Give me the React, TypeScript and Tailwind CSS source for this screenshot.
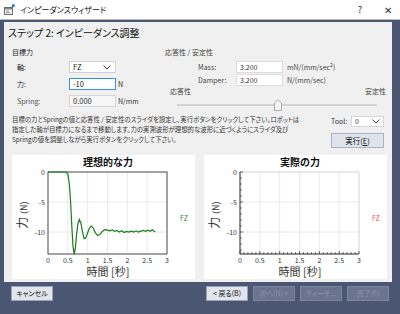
import React from 'react';

const jp = "font-['Noto_Sans_CJK_JP',sans-serif] [font-feature-settings:'palt']";

const WizardIcon = () => (
  <svg width="11" height="11" viewBox="0 0 11 11">
    <rect x="0.5" y="3.5" width="8" height="7" fill="#f4f4f4" stroke="#6b6b6b" />
    <rect x="1" y="4" width="7" height="1.5" fill="#8c8c8c" />
    <rect x="2" y="6.5" width="3" height="1" fill="#9a9a9a" />
    <rect x="2" y="8" width="4" height="1" fill="#9a9a9a" />
    <path d="M7 4 L10 1 M8 1 H10 V3" stroke="#2b7bd6" strokeWidth="1.3" fill="none" />
  </svg>
);

const Chevron = () => (
  <svg width="8" height="5" viewBox="0 0 8 5">
    <path d="M0.5 0.5 L4 4 L7.5 0.5" stroke="#333" strokeWidth="0.9" fill="none" />
  </svg>
);

const curve: [number, number][] = [
  [0, 0], [0.45, 0], [0.5, -0.3], [0.54, -2], [0.57, -5], [0.6, -9], [0.63, -12.4],
  [0.66, -13.7], [0.69, -12.6], [0.72, -10.4], [0.75, -8.7], [0.79, -7.9], [0.83, -8.5],
  [0.87, -10], [0.91, -11.1], [0.95, -11.0], [0.99, -10.3], [1.04, -9.4], [1.09, -9.0],
  [1.14, -9.3], [1.19, -10.1], [1.25, -10.6], [1.31, -10.4], [1.37, -9.9], [1.43, -9.6],
  [1.5, -9.7], [1.56, -9.8], [1.62, -9.65], [1.68, -9.9], [1.74, -9.75], [1.8, -10.0],
  [1.86, -9.8], [1.92, -10.1], [1.98, -9.9], [2.04, -10.0], [2.1, -9.85], [2.16, -10.0],
  [2.22, -9.8], [2.28, -10.0], [2.34, -9.85], [2.4, -9.75], [2.46, -9.9], [2.52, -9.7],
  [2.58, -9.9], [2.63, -9.6], [2.67, -9.85], [2.7, -10.0],
];

const X0 = 36;
const X1 = 155;
const Y0 = 17;
const Y1 = 99;
const px = (t: number) => X0 + (t / 3) * (X1 - X0);
const py = (f: number) => Y0 - f * 6;

const Chart = ({
  title,
  legend,
  legendColor,
  data,
  ticks,
}: {
  title: string;
  legend: string;
  legendColor: string;
  data?: [number, number][];
  ticks?: boolean;
}) => {
  const fam = "'Noto Sans CJK JP', sans-serif";
  const xs = [0, 0.5, 1, 1.5, 2, 2.5, 3];
  return (
    <div className="w-[183px] h-[124px] bg-white">
      <svg width="183" height="124" viewBox="0 0 183 124" fontFamily={fam}>
        <text x="96" y="11" textAnchor="middle" fontSize="10" fontWeight="700" fill="#111">
          {title}
        </text>
        {xs.slice(1, 6).map((t) => (
          <line key={t} x1={px(t)} x2={px(t)} y1={Y0} y2={Y1} stroke="#e4e4e4" strokeWidth="0.8" />
        ))}
        {[-5, -10].map((f) => (
          <line key={f} x1={X0} x2={X1} y1={py(f)} y2={py(f)} stroke="#e4e4e4" strokeWidth="0.8" />
        ))}
        {ticks ? (
          <>
            <line x1={X0} x2={X1} y1={Y0} y2={Y0} stroke="#c8c8c8" strokeWidth="0.8" />
            <line x1={X1} x2={X1} y1={Y0} y2={Y1} stroke="#c8c8c8" strokeWidth="0.8" />
            <line x1={X0} x2={X0} y1={Y0} y2={Y1} stroke="#222" strokeWidth="1" />
            <line x1={X0} x2={X1} y1={Y1} y2={Y1} stroke="#222" strokeWidth="1" />
            {Array.from({ length: 14 }, (_, i) => (
              <line key={'y' + i} x1={X0} x2={X0 + (i % 5 === 0 ? 3 : 1.8)} y1={py(-i)} y2={py(-i)} stroke="#222" strokeWidth="0.7" />
            ))}
            {Array.from({ length: 31 }, (_, i) => (
              <line key={'x' + i} x1={px(i / 10)} x2={px(i / 10)} y1={Y1} y2={Y1 - (i % 5 === 0 ? 3 : 1.8)} stroke="#222" strokeWidth="0.7" />
            ))}
          </>
        ) : (
          <rect x={X0} y={Y0} width={X1 - X0} height={Y1 - Y0} fill="none" stroke="#333" strokeWidth="0.9" />
        )}
        {[0, -5, -10].map((f) => (
          <text key={f} x={X0 - 3} y={py(f) + 2.5} textAnchor="end" fontSize="7" fill="#333">
            {f}
          </text>
        ))}
        {xs.map((t) => (
          <text key={t} x={px(t)} y={Y1 + 8.5} textAnchor="middle" fontSize="7" fill="#333">
            {t}
          </text>
        ))}
        {data && (
          <polyline
            points={data.map(([t, f]) => `${px(t).toFixed(1)},${py(f).toFixed(1)}`).join(' ')}
            fill="none"
            stroke="#1d7a1d"
            strokeWidth="1.2"
          />
        )}
        <text x="96" y="121" textAnchor="middle" fontSize="11" fill="#333">
          時間 [秒]
        </text>
        <text transform="translate(15 60) rotate(-90)" textAnchor="middle" fontSize="12" fill="#333">
          力 <tspan fontSize="9">(N)</tspan>
        </text>
        <text x="172" y="66" textAnchor="middle" fontSize="7" fill={legendColor}>
          {legend}
        </text>
      </svg>
    </div>
  );
};

const Btn = ({ label, disabled }: { label: string; disabled?: boolean }) => (
  <div
    className={
      disabled
        ? 'w-[42px] h-[15px] flex items-center justify-center text-[7px] bg-[#69748e] text-[#8f98ad] border border-[#7b859d]'
        : 'w-[42px] h-[15px] flex items-center justify-center text-[7px] bg-[#e2e5ed] text-[#111] border border-[#9aa3b5]'
    }
  >
    {label}
  </div>
);

export default function App() {
  return (
    <div className={`w-[400px] h-[314px] bg-[#4a5672] flex flex-col overflow-hidden text-[#1a1a1a] ${jp}`}>
      <div className="h-[20px] bg-white border-b border-[#b9bcc4] flex items-center pl-[4px] pr-[8px] shrink-0">
        <WizardIcon />
        <span className="ml-[5px] text-[8px] text-[#111]">インピーダンスウィザード</span>
        <span className="ml-auto text-[9px] text-[#222] mr-[22px]">?</span>
        <span className="text-[10px] text-[#333] font-light">✕</span>
      </div>

      <div className="pl-[4px] pr-[8px] pt-[2px] shrink-0">
        <div className="h-[260px] bg-[#f0f0f0] flex flex-col">
          <div className="mt-[4px] h-[14px] leading-[14px] pl-[4px] text-[10px] text-[#111]">
            ステップ 2: インピーダンス調整
          </div>

          <div className="mt-[7px] h-[66px] flex text-[7px]">
            <div className="w-[161px] pl-[8px]">
              <div className="h-[10px] leading-[10px] text-[#222]">目標力</div>
              <div className="mt-[4px] h-[12px] flex items-center pl-[5px]">
                <span className="w-[52px]">軸:</span>
                <div className="w-[47px] h-[12px] bg-white border border-[#d0d0d0] flex items-center justify-between pl-[3px] pr-[4px] text-[7.5px]">
                  <span>FZ</span>
                  <Chevron />
                </div>
              </div>
              <div className="mt-[5px] h-[12px] flex items-center pl-[5px]">
                <span className="w-[52px]">力:</span>
                <div className="w-[47px] h-[12px] bg-white border border-[#3c8fe0] flex items-center pl-[3px] text-[7.5px]">
                  -10
                </div>
                <span className="ml-[2px]">N</span>
              </div>
              <div className="mt-[5px] h-[12px] flex items-center pl-[5px] text-[#555]">
                <span className="w-[52px]">Spring:</span>
                <div className="w-[47px] h-[12px] bg-[#f7f7f7] border border-[#d6d6d6] flex items-center pl-[3px] text-[7.5px] text-[#333]">
                  0.000
                </div>
                <span className="ml-[2px] text-[#333]">N/mm</span>
              </div>
            </div>

            <div className="flex-1">
              <div className="h-[10px] leading-[10px] text-[#444]">応答性 / 安定性</div>
              <div className="pl-[33px] text-[#444]">
                <div className="mt-[4px] h-[12px] flex items-center">
                  <span className="w-[38px]">Mass:</span>
                  <div className="w-[47px] h-[12px] bg-white border border-[#dcdcdc] flex items-center pl-[3px] text-[#333]">
                    3.200
                  </div>
                  <span className="ml-[4px]">
                    mN/(mm/sec<sup className="text-[5px]">2</sup>)
                  </span>
                </div>
                <div className="mt-[1px] h-[12px] flex items-center">
                  <span className="w-[38px]">Damper:</span>
                  <div className="w-[47px] h-[12px] bg-white border border-[#dcdcdc] flex items-center pl-[3px] text-[#333]">
                    3.200
                  </div>
                  <span className="ml-[4px]">N/(mm/sec)</span>
                </div>
              </div>
              <div className="h-[10px] leading-[10px] flex justify-between pl-[5px] pr-[6px] text-[#444]">
                <span>応答性</span>
                <span>安定性</span>
              </div>
              <div className="mt-[3px] ml-[12px] w-[200px] h-[12px] relative">
                <div className="absolute left-0 right-0 top-[5px] h-[2px] bg-[#e7e7e7] border border-[#d4d4d4]" />
                <svg className="absolute left-[97px] top-0" width="8" height="12" viewBox="0 0 8 12">
                  <path d="M0.5 11.5 V4 L4 0.7 L7.5 4 V11.5 Z" fill="#f4f4f4" stroke="#9a9a9a" strokeWidth="0.8" />
                </svg>
              </div>
            </div>
          </div>

          <div className="mt-[2px] h-[38px] flex">
            <div className="w-[320px] pl-[8px] text-[6.4px] leading-[10px] text-[#333]">
              <div>目標の力とSpringの値と応答性 / 安定性のスライダを設定し、実行ボタンをクリックして下さい。ロボットは</div>
              <div>指定した軸が目標力になるまで移動します。力の実測波形が理想的な波形に近づくようにスライダ及び</div>
              <div>Springの値を調整しながら実行ボタンをクリックして下さい。</div>
            </div>
            <div className="ml-[7px] w-[53px] pt-[1px]">
              <div className="h-[11px] flex items-center text-[7px] text-[#333]">
                <span className="w-[20px]">Tool:</span>
                <div className="w-[33px] h-[11px] bg-white border border-[#d6d6d6] flex items-center justify-between pl-[3px] pr-[3px]">
                  <span>0</span>
                  <Chevron />
                </div>
              </div>
              <div className="mt-[6px] h-[15px] bg-[#dfe3ec] border border-[#aab2c2] flex items-center justify-center text-[7.5px] text-[#111]">
                実行(<span className="underline">E</span>)
              </div>
            </div>
          </div>

          <div className="mt-[2px] flex gap-[9px] pl-[8px]">
            <Chart title="理想的な力" legend="FZ" legendColor="#2a8a2a" data={curve} />
            <Chart title="実際の力" legend="FZ" legendColor="#ff4d4d" ticks />
          </div>
        </div>
      </div>

      <div className="flex-1 flex items-start pt-[4px] pl-[11px] pr-[11px]">
        <Btn label="キャンセル" />
        <div className="ml-auto flex gap-[5px]">
          <Btn label="< 戻る(B)" />
          <Btn label="次へ(N) >" disabled />
          <Btn label="ティーチ..." disabled />
          <Btn label="完了(F)" disabled />
        </div>
      </div>
    </div>
  );
}
